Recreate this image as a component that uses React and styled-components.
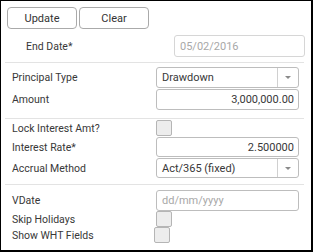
import React from "react"
import styled, { createGlobalStyle } from "styled-components"

const GlobalStyle = createGlobalStyle`
    html, body {
        margin: 0;
        padding: 0;
        background: #fff;
    }
    * {
        box-sizing: border-box;
    }
`;

const Frame = styled.div`
    width: 313px;
    height: 252px;
    border-style: solid;
    border-color: #000;
    border-width: 1px 2px 2px 1px;
    background: #fff;
    font-family: Roboto, "Liberation Sans", sans-serif;
    font-size: 10.5px;
    color: #383838;
    display: flex;
    flex-direction: column;
`;

const Toolbar = styled.div`
    display: flex;
    gap: 2px;
    padding: 6px 0 0 6px;
`;

const Button = styled.button`
    width: 70px;
    height: 22px;
    border: 1px solid #aaa;
    border-radius: 4px;
    background: #fff;
    font-family: inherit;
    font-size: 11px;
    color: #333;
    padding: 0;
`;

const Section = styled.div`
    display: flex;
    flex-direction: column;
    gap: ${p => p.gap || 0}px;
    padding: ${p => p.pad || "0"};
`;

const Divider = styled.div`
    height: 1px;
    margin: 0 7px 0 4px;
    background: #e3e3e3;
`;

const Row = styled.div`
    display: flex;
    align-items: center;
    height: ${p => p.h || 21}px;
`;

const Label = styled.div`
    width: ${p => p.w || 155}px;
    padding-left: ${p => p.indent || 11}px;
    flex-shrink: 0;
    white-space: nowrap;
`;

const Input = styled.div`
    width: ${p => p.w || 143}px;
    height: 100%;
    border: 1px solid ${p => p.light ? "#d6d6d6" : "#bdbdbd"};
    border-radius: 3px;
    background: #fff;
    display: flex;
    align-items: center;
    justify-content: ${p => p.right ? "flex-end" : "flex-start"};
    padding: 0 4px 0 5px;
    color: ${p => p.muted ? "#a8a8a8" : "#383838"};
    font-size: 11px;
`;

const Select = styled.div`
    width: 143px;
    height: 100%;
    border: 1px solid #bdbdbd;
    border-radius: 3px;
    background: #fff;
    display: flex;
    font-size: 11px;
`;

const SelectValue = styled.div`
    flex: 1;
    display: flex;
    align-items: center;
    padding-left: 5px;
`;

const SelectArrow = styled.div`
    width: 21px;
    border-left: 1px solid #d0d0d0;
    display: flex;
    align-items: center;
    justify-content: center;

    &::after {
        content: "";
        border-left: 3px solid transparent;
        border-right: 3px solid transparent;
        border-top: 3px solid #8a8a8a;
    }
`;

const Check = styled.div`
    width: 16px;
    height: 16px;
    margin-left: ${p => p.shift || 0}px;
    border: 1px solid #b5b5b5;
    border-radius: 2px;
    background: #ededed;
`;

export default function App() {
    return (
        <>
            <GlobalStyle />
            <Frame>
                <Toolbar>
                    <Button>Update</Button>
                    <Button>Clear</Button>
                </Toolbar>
                <Section pad="6px 0 5px 0">
                    <Row h={22}>
                        <Label w={173} indent={25}>End Date*</Label>
                        <Input w={131} light muted>05/02/2016</Input>
                    </Row>
                </Section>
                <Divider />
                <Section pad="4px 0 8px 0" gap={1}>
                    <Row>
                        <Label>Principal Type</Label>
                        <Select>
                            <SelectValue>Drawdown</SelectValue>
                            <SelectArrow />
                        </Select>
                    </Row>
                    <Row>
                        <Label>Amount</Label>
                        <Input right>3,000,000.00</Input>
                    </Row>
                </Section>
                <Divider />
                <Section pad="1px 0 6px 0" gap={1}>
                    <Row h={16}>
                        <Label>Lock Interest Amt?</Label>
                        <Check />
                    </Row>
                    <Row h={20}>
                        <Label>Interest Rate*</Label>
                        <Input right>2.500000</Input>
                    </Row>
                    <Row h={20}>
                        <Label>Accrual Method</Label>
                        <Select>
                            <SelectValue>Act/365 (fixed)</SelectValue>
                            <SelectArrow />
                        </Select>
                    </Row>
                </Section>
                <Divider />
                <Section pad="5px 0 0 0">
                    <Row h={21}>
                        <Label>VDate</Label>
                        <Input muted>dd/mm/yyyy</Input>
                    </Row>
                    <Row h={16}>
                        <Label>Skip Holidays</Label>
                        <Check />
                    </Row>
                    <Row h={16}>
                        <Label>Show WHT Fields</Label>
                        <Check shift={-2} />
                    </Row>
                </Section>
            </Frame>
        </>
    )
}
